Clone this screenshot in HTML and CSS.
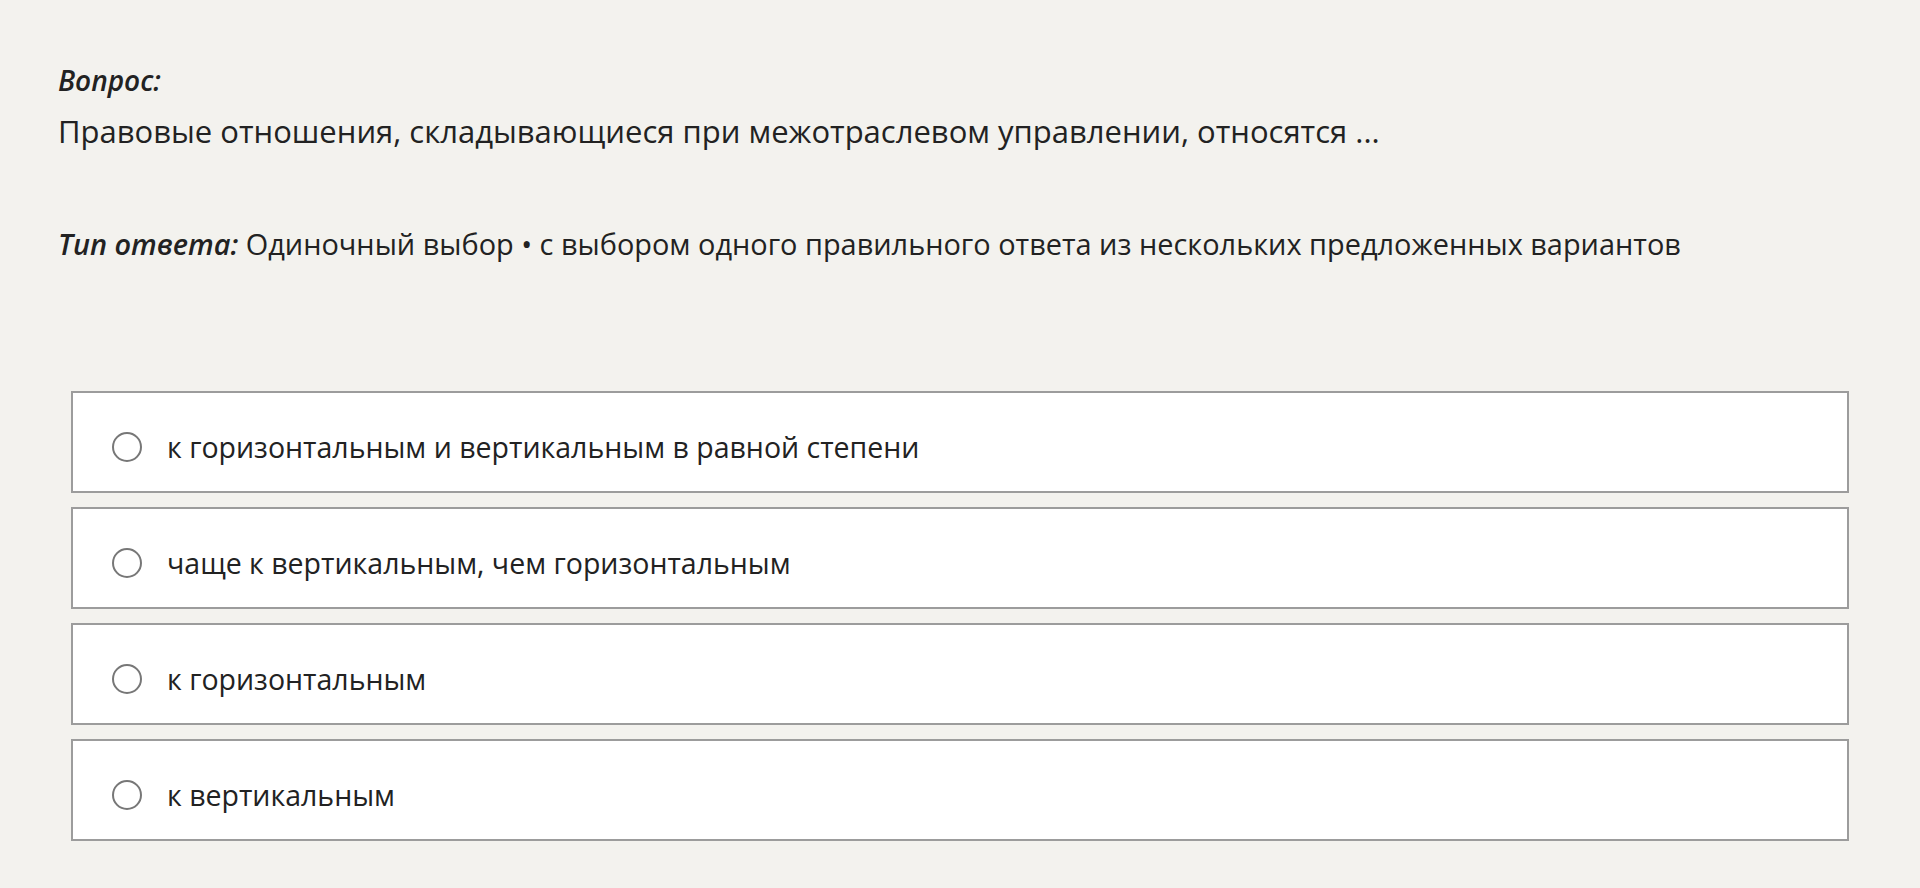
FILE: index.html
```html
<!DOCTYPE html>
<html lang="ru">
<head>
    <meta charset="UTF-8">
    <meta name="viewport" content="width=device-width, initial-scale=1.0">
    <title>Вопрос</title>
    <link rel="stylesheet" href="styles.css">
</head>
<body>
    <div class="question">
        <div class="question-label">Вопрос:</div>
        <div class="question-text">Правовые отношения, складывающиеся при межотраслевом управлении, относятся ...</div>
    </div>

    <div class="answer-type">
        <span class="answer-type-label">Тип ответа:</span> Одиночный выбор • с выбором одного правильного ответа из нескольких предложенных вариантов
    </div>

    <div class="options">
        <label class="option">
            <span class="radio"></span>
            <span class="option-text">к горизонтальным и вертикальным в равной степени</span>
        </label>
        <label class="option">
            <span class="radio"></span>
            <span class="option-text">чаще к вертикальным, чем горизонтальным</span>
        </label>
        <label class="option">
            <span class="radio"></span>
            <span class="option-text">к горизонтальным</span>
        </label>
        <label class="option">
            <span class="radio"></span>
            <span class="option-text">к вертикальным</span>
        </label>
    </div>
</body>
</html>
```

FILE: styles.css
```css
body {
    margin: 0;
    padding: 60px 58px 40px;
    font-family: 'Open Sans', 'Noto Sans', sans-serif;
    font-size: 28px;
    background: #f3f2ee;
    color: #222222;
}

.question-label {
    font-style: italic;
    font-weight: 600;
    line-height: 40px;
    margin-bottom: 5px;
}

.question-text {
    font-size: 31px;
    line-height: 52px;
}

.answer-type {
    margin-top: 62px;
    font-size: 28.9px;
    line-height: 50px;
}

.answer-type-label {
    font-style: italic;
    font-weight: 600;
}

.options {
    margin: 122px 13px 0;
    display: flex;
    flex-direction: column;
    gap: 14px;
}

.option {
    display: flex;
    align-items: center;
    gap: 25px;
    height: 102px;
    box-sizing: border-box;
    padding: 10px 0 0 39px;
    background: #ffffff;
    border: 2px solid #9c9c9c;
    cursor: pointer;
}

.radio {
    width: 30px;
    height: 30px;
    box-sizing: border-box;
    border: 2px solid #777777;
    border-radius: 50%;
    flex-shrink: 0;
}

.option-text {
    font-size: 28.5px;
    line-height: 40px;
}
```
